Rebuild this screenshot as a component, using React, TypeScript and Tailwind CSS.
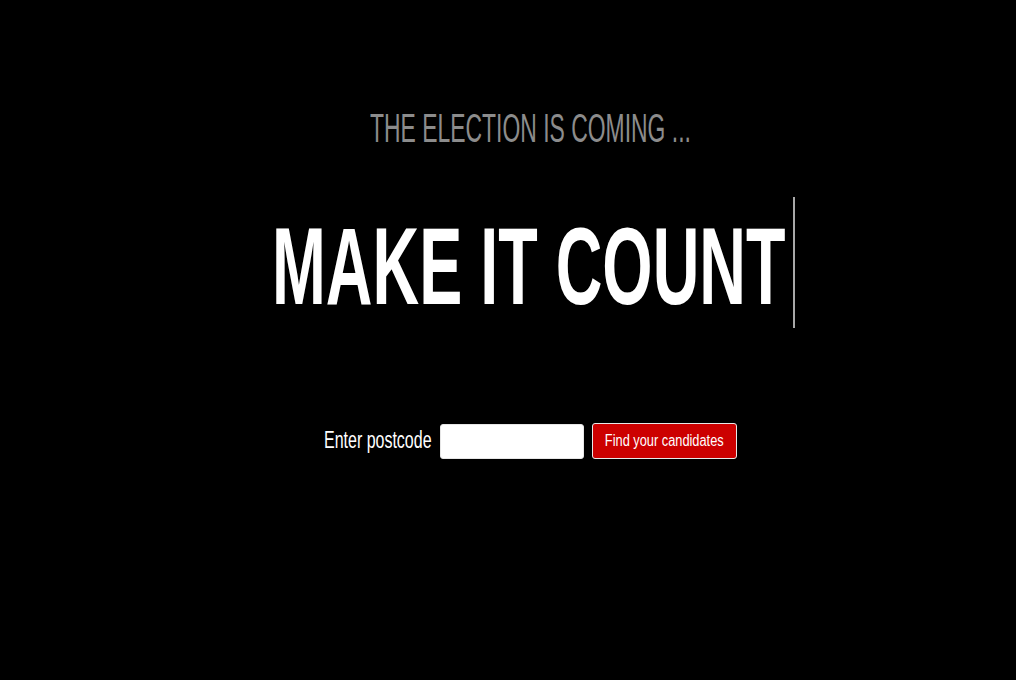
// Oswald isn't available, so Liberation Sans is squeezed horizontally to match its narrow letters
const font = { fontFamily: '"Liberation Sans", Arial, sans-serif' };

export default function App() {
  return (
    <div className="min-h-screen w-full bg-black text-white" style={font}>
      <div className="flex flex-col items-center pl-[44px] pt-[108px]">
        <div className="h-[40px] w-[320px] shrink-0">
          <span className="block origin-left scale-x-[0.559] whitespace-nowrap text-[41px] leading-[40px] text-[#8c8c8c]">
            THE ELECTION IS COMING ...
          </span>
        </div>

        <div className="mt-[49px] ml-[6px] flex h-[131px] items-start">
          <div className="h-[131px] w-[513px] shrink-0">
            <span className="block origin-left scale-x-[0.593] whitespace-nowrap text-[109px] font-bold leading-[139px] text-white">
              MAKE IT COUNT
            </span>
          </div>
          <div className="ml-[8px] h-[131px] w-[2px] bg-[#a8a8a8]" />
        </div>

        <div className="mt-[95px] flex items-center">
          <div className="-mt-[2px] h-[23px] w-[106px] shrink-0">
            <label className="block origin-left scale-x-[0.695] whitespace-nowrap text-[23px] leading-[23px] text-white">
              Enter postcode
            </label>
          </div>
          <input
            type="text"
            className="ml-[10px] h-[35px] w-[144px] rounded-[3px] border border-[#e6e6e6] bg-white px-2 text-black outline-none"
          />
          <button className="ml-[8px] flex h-[36px] w-[145px] items-center justify-center overflow-hidden rounded-[3px] border border-[#e8e8e8] bg-[#cc0000]">
            <span className="block scale-x-[0.8] whitespace-nowrap text-[16px] leading-[16px] text-white">
              Find your candidates
            </span>
          </button>
        </div>
      </div>
    </div>
  );
}
